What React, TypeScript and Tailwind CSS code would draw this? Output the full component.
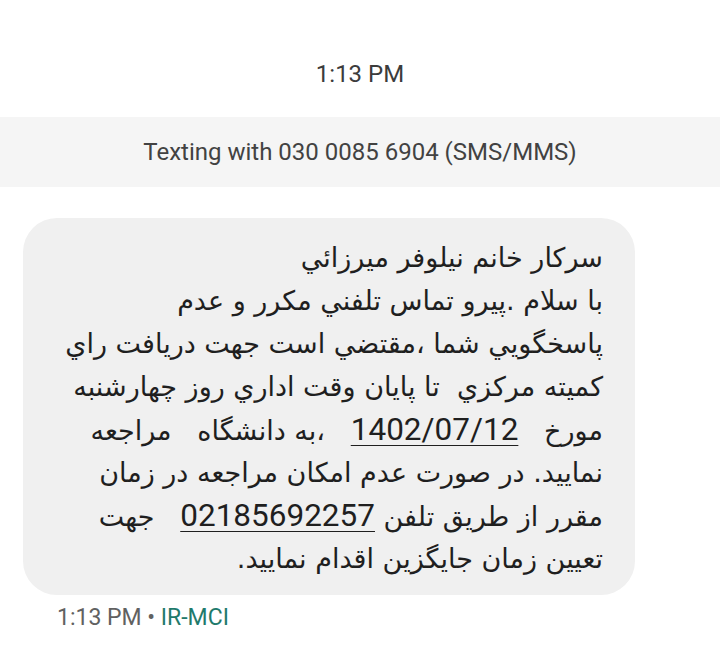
const Num = ({ children }: { children: React.ReactNode }) => (
  <span className="font-['Roboto',sans-serif] text-[31.5px] underline underline-offset-[5px] decoration-1">{children}</span>
);

const LINES: React.ReactNode[] = [
  'سرکار خانم نيلوفر ميرزائي',
  'با سلام .پيرو تماس تلفني مکرر و عدم',
  'پاسخگويي شما ،مقتضي است جهت دريافت راي',
  'کميته مرکزي  تا پايان وقت اداري روز چهارشنبه',
  <>
    مورخ{'   '}<Num>1402/07/12</Num>{'   '}،به دانشگاه{'   '}مراجعه
  </>,
  'نماييد. در صورت عدم امکان مراجعه در زمان',
  <>
    مقرر از طريق تلفن <Num>02185692257</Num>{'   '}جهت
  </>,
  'تعيين زمان جايگزين اقدام نماييد.',
];

export default function App() {
  return (
    <div className="w-[720px] h-[649px] bg-white font-['Roboto','Liberation_Sans',sans-serif] overflow-hidden">
      {/* time header */}
      <div className="h-[117px] flex items-end justify-center pb-[25px]">
        <span className="text-[24px] text-[#3c3c3c]">1:13 PM</span>
      </div>

      {/* conversation info band */}
      <div className="h-[70px] bg-[#f5f5f5] flex items-center justify-center">
        <span className="text-[24px] text-[#424242]">Texting with 030 0085 6904 (SMS/MMS)</span>
      </div>

      {/* message bubble */}
      <div className="pl-[23px] pt-[31px]">
        <div className="w-[612px] rounded-[34px] bg-[#f0f0f0] pt-[18px] pb-[15px] pr-[32px] pl-[16px]">
          <div dir="rtl" className="text-right font-['DejaVu_Sans',sans-serif] text-[27px] leading-[43px] text-[#1f1f1f]">
            {LINES.map((l, i) => (
              <div key={i} className="whitespace-pre h-[43px]">{l}</div>
            ))}
          </div>
        </div>
        <div className="mt-[6px] pl-[34px] text-[23px] text-[#616161]">
          1:13 PM • <span className="text-[#1f7a6c]">IR-MCI</span>
        </div>
      </div>
    </div>
  );
}
